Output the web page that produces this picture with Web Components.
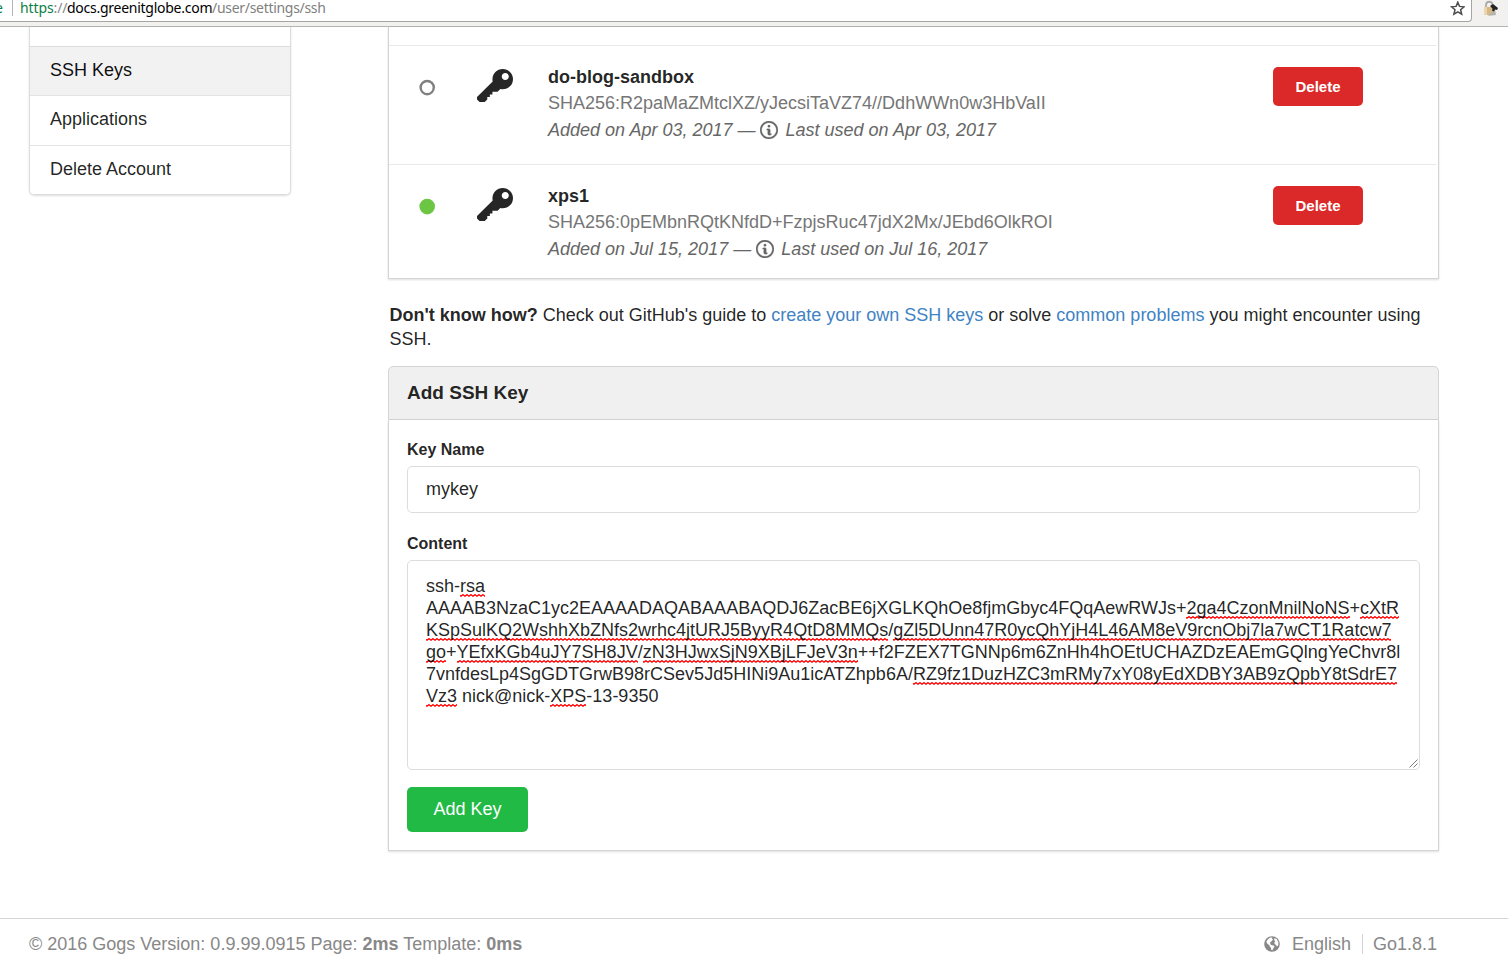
<!DOCTYPE html>
<html lang="en">
<head>
<meta charset="utf-8">
<title>SSH Keys - Gogs</title>
<style>
html,body{margin:0;height:100%}
body{font:18px/24px "Liberation Sans",Arial,sans-serif;color:rgba(0,0,0,.87);background:#fff;overflow:hidden}
</style>
</head>
<body>
<ssh-page></ssh-page>
<script>
const def = (name, html) => customElements.define(name, class extends HTMLElement {
  constructor() {
    super();
    const t = document.createElement('template');
    t.innerHTML = html.trim();
    this.attachShadow({mode: 'open'}).appendChild(t.content.cloneNode(true));
  }
});

def('browser-bar', `
<style>
:host{display:block;height:26px;background:#f2f1f0;border-bottom:1px solid #b4b4b2;font:14px/16px "Noto Sans",sans-serif}
.row{display:flex;height:22px}
.url{box-sizing:border-box;width:1472px;height:22px;background:#fff;border:solid #a5a5a3;border-width:0 1px 1px 0;border-bottom-right-radius:4px;display:flex;align-items:flex-start}
.e{width:12px;color:#0b8043;text-indent:-5px}
.sep{width:1px;height:16px;background:#b5b5b5;margin-right:7px}
.t{display:flex;flex:1;white-space:pre}
.s{color:#0b8043;width:47px;letter-spacing:-.1px}.s i{font-style:normal;color:#888}
.h{color:#000;width:145px;letter-spacing:-.26px}.p{color:#808080;letter-spacing:-.3px}
.star{margin:1px 6px 0 0}
.ext{margin:0 0 0 10px}
</style>
<div class="row"><div class="url"><div class="e">e</div><div class="sep"></div>
<div class="t"><span class="s">https<i>://</i></span><span class="h">docs.greenitglobe.com</span><span class="p">/user/settings/ssh</span></div>
<svg class="star" width="15" height="15" viewBox="0 0 15 15"><path d="M7.8 1.2 9.5 5.4 14.100 5.8 10.600 8.8 11.700 13.2 7.8 10.800 3.9 13.2 5 8.800 1.500 5.8 6.100 5.4Z" fill="none" stroke="#4d4d4d" stroke-width="1.5"/></svg></div>
<svg class="ext" width="18" height="18" viewBox="0 0 18 18"><path d="M4 8V4.500a3.300 3.300 0 0 1 6.500 0V7" fill="none" stroke="#aaa" stroke-width="1.800"/><path d="M2 7h9v8H2Z" fill="#d8b882"/><path d="M2 7h3v8H2Z" fill="#ead5ae"/><path d="m6 16 7-7 1 6Z" fill="#b5b5b0"/><path d="m8 6 3-2 5 4-1 2-2-.5-1 2-2-1 .5-2Z" fill="#222"/></svg></div>`);

def('nav-item', `
<style>
:host{display:flex;align-items:center;box-sizing:border-box;height:49px;padding:0 20px 2px;border-top:1px solid #e3e3e4}
:host([active]){background:#f2f2f2;color:rgba(0,0,0,.95);border-top-color:#dcdddd}
</style><slot></slot>`);

def('side-nav', `
<style>
:host{display:block;box-sizing:border-box;width:262px;height:168px;border:1px solid #dcdddd;border-top:0;border-radius:0 0 5px 5px;box-shadow:0 1px 2px rgba(34,36,38,.15);padding-top:19px;overflow:hidden}
::slotted(:nth-child(2)){height:50px;padding-bottom:3px}
</style><slot></slot>`);

def('ui-button', `
<style>
:host{display:flex;align-items:center;justify-content:center;box-sizing:border-box;border-radius:5px;color:#fff;width:121px;height:45px;background:#21ba45;padding-bottom:1px}
:host([danger]){width:90px;height:39px;background:#db2828;font-size:15px;font-weight:bold;padding:1px 0 0}
</style><slot></slot>`);

def('info-icon', `
<style>:host{display:inline-block;width:18px;height:18px;margin:0 7px 0 5px;vertical-align:-3px}svg{display:block}</style>
<svg width="18" height="18" viewBox="0 .98 14 14"><path fill="#666" stroke="#666" stroke-width=".2" d="M6.3 5.69a.942.942 0 0 1-.28-.7c0-.28.09-.52.28-.7.19-.18.42-.28.7-.28.28 0 .52.09.7.28.18.19.28.42.28.7 0 .28-.09.52-.28.7a1 1 0 0 1-.7.3c-.28 0-.52-.11-.7-.3zM8 7.99c-.02-.25-.11-.48-.31-.69-.2-.19-.42-.3-.69-.31H6c-.27.02-.48.13-.69.31-.2.2-.3.44-.31.69h1v3c.02.27.11.5.31.69.2.2.42.31.69.31h1c.27 0 .48-.11.69-.31.2-.19.3-.42.31-.69H8V7.98v.01zM7 2.3c-3.14 0-5.7 2.54-5.7 5.68 0 3.14 2.56 5.7 5.7 5.7s5.7-2.55 5.7-5.7c0-3.15-2.56-5.69-5.7-5.69v.01zM7 .98c3.86 0 7 3.14 7 7s-3.14 7-7 7-7-3.12-7-7 3.14-7 7-7z"/></svg>`);

def('key-row', `
<style>
:host{display:flex;box-sizing:border-box;height:119px;margin:0 2px 0 0;border-top:1px solid #e8e9e9;padding:21px 73px 0 30px;align-items:flex-start}
:host(:last-of-type){height:114px}
.dot{margin:12px 42px 0 0}
circle{fill:none;stroke:#808080;stroke-width:2.4}
:host([used]) circle{fill:#6cc644;stroke:#6cc644}
.key{margin:2px 35px 0 0}
.txt{flex:1;display:flex;flex-direction:column;white-space:nowrap;line-height:26px;margin-top:-3px}
.n{font-weight:bold}.f{color:#767676}.d{font-style:italic;color:#666;line-height:28px}
</style>
<svg class="dot" width="16" height="17"><circle cx="8.200" cy="8.600" r="6.600"/></svg>
<svg class="key" width="36" height="33" viewBox="0 1 14 13" preserveAspectRatio="none"><path fill="#262626" d="M12.83 2.17C12.08 1.42 11.14 1.03 10 1c-1.13.03-2.08.42-2.83 1.17S6.04 3.86 6.01 5c0 .3.03.59.09.89L0 12v1l1 1h2l1-1v-1h1v-1h1v-1h2l1.09-1.11c.3.08.59.11.91.11 1.14-.03 2.08-.42 2.83-1.17S13.97 6.14 14 5c-.03-1.14-.42-2.08-1.17-2.83zM11 5.38c-.77 0-1.38-.61-1.38-1.38 0-.77.61-1.38 1.38-1.38.77 0 1.38.61 1.38 1.38 0 .77-.61 1.38-1.38 1.38z"/></svg>
<div class="txt"><div class="n"><slot name="name"></slot></div><div class="f"><slot name="print"></slot></div><div class="d"><slot name="date"></slot></div></div>
<ui-button danger>Delete</ui-button>`);

def('key-list', `
<style>:host{display:block;box-sizing:border-box;height:252px;border:1px solid #d4d4d5;border-top:0;box-shadow:0 1px 2px rgba(34,36,38,.15);padding-top:18px}</style><slot></slot>`);

def('help-text', `
<style>:host{display:block;margin:24px 0 15px 1.4px;line-height:24px}a{color:#4183c4}</style>
<b>Don't know how?</b> Check out GitHub's guide to <a>create your own SSH keys</a> or solve <a>common problems</a> you might encounter using SSH.`);

def('text-field', `
<style>
:host{display:block}
label{display:block;font-weight:bold;font-size:16px;line-height:22px;padding-top:1px;margin-bottom:5px}
.box{position:relative;box-sizing:border-box;height:47px;border:1px solid #dcdddd;border-radius:5px;padding:11px 18px;line-height:22px;white-space:nowrap}
:host([tall]) .box{height:210px;padding-top:14px}
svg{display:none}
:host([tall]) svg{display:block;position:absolute;right:1px;bottom:1px}
</style>
<label><slot name="label"></slot></label><div class="box"><slot></slot><svg width="9" height="9" viewBox="0 0 9 9"><path d="M.5 8.500l8-8M4.500 8.500l4-4" stroke="#777" fill="none"/></svg></div>`);

def('text-line', `<style>:host{display:block;height:22px;white-space:pre}</style><slot></slot>`);

def('mis-spelt', `
<style>:host{display:inline-block;height:22px;background:url("data:image/svg+xml,%3Csvg xmlns='http://www.w3.org/2000/svg' width='4' height='3'%3E%3Cpath d='M-1 .5L1 2.300L3 .5L5 2.300' fill='none' stroke='%23f00' stroke-width='1.150'/%3E%3C/svg%3E") repeat-x left bottom}</style><slot></slot>`);

def('add-panel', `
<style>
:host{display:block;box-sizing:border-box;height:485px}
h4{box-sizing:border-box;height:54px;margin:0;font-size:19px;line-height:52px;padding-left:18px;background:#f0f0f0;border:1px solid #d4d4d5;border-radius:5px 5px 0 0}
.body{box-sizing:border-box;height:431px;border:1px solid #d4d4d5;border-top:0;box-shadow:0 1px 2px rgba(34,36,38,.15);padding:18px 18px 0;display:flex;flex-direction:column;gap:19px}
ui-button{margin-top:-2px}
</style>
<h4>Add SSH Key</h4>
<div class="body">
<text-field><span slot="label">Key Name</span>mykey</text-field>
<text-field tall><span slot="label">Content</span><text-line>ssh-<mis-spelt>rsa</mis-spelt></text-line><text-line>AAAAB3NzaC1yc2EAAAADAQABAAABAQDJ6ZacBE6jXGLKQhOe8fjmGbyc4FQqAewRWJs+<mis-spelt>2ga4CzonMnilNoNS</mis-spelt>+<mis-spelt>cXtR</mis-spelt></text-line><text-line><mis-spelt>KSpSulKQ2WshhXbZNfs2wrhc4jtURJ5ByyR4QtD8MMQs</mis-spelt>/<mis-spelt>gZl5DUnn47R0ycQhYjH4L46AM8eV9rcnObj7la7wCT1Ratcw7</mis-spelt></text-line><text-line><mis-spelt>go</mis-spelt>+<mis-spelt>YEfxKGb4uJY7SH8JV</mis-spelt>/<mis-spelt>zN3HJwxSjN9XBjLFJeV3n</mis-spelt>++f2FZEX7TGNNp6m6ZnHh4hOEtUCHAZDzEAEmGQlngYeChvr8l</text-line><text-line>7vnfdesLp4SgGDTGrwB98rCSev5Jd5HINi9Au1icATZhpb6A/<mis-spelt>RZ9fz1DuzHZC3mRMy7xY08yEdXDBY3AB9zQpbY8tSdrE7</mis-spelt></text-line><text-line><mis-spelt>Vz3</mis-spelt> nick@nick-<mis-spelt>XPS</mis-spelt>-13-9350</text-line></text-field>
<ui-button>Add Key</ui-button>
</div>`);

def('page-footer', `
<style>
:host{display:flex;box-sizing:border-box;height:43px;border-top:1px solid #d4d4d4;padding:0 71px 0 29px;color:#888;justify-content:space-between;line-height:50px;white-space:nowrap}
.r{display:flex;align-items:center;height:50px}
.r svg{margin-right:12px}
.v{border-left:1px solid #d4d4d4;line-height:20px;height:20px;padding-left:10px;margin-left:11px}
</style>
<div>© 2016 Gogs Version: 0.9.99.0915 Page: <b>2ms</b> Template: <b>0ms</b></div>
<div class="r"><svg width="16" height="16" viewBox="0 0 16 16"><circle cx="8" cy="8" r="7.8" fill="#888"/><path fill="#fff" d="M4.200 3 6.500 1.600 8.500 1.500 7.800 2.800 9.200 3.500 7.900 4.800 6.900 5.900 5.700 6.500 6.600 7.400 6 8 7.300 8.900 9.600 9.500 10.600 10.600 9.500 12 8.400 14.200 7.200 13.800 6.800 11.600 5.600 10.300 5.300 8.900 3.500 7.900 2.300 5.600ZM10.400 2 12.600 3.100 14.300 6 14.400 9 13 10.500 12 9 10.700 8 10.300 6.500 11.300 5.200 10.200 4.200Z"/></svg><span>English</span><span class="v">Go1.8.1</span></div>`);

def('ssh-page', `
<style>
:host{display:flex;flex-direction:column;height:961px;overflow:hidden}
main{display:grid;grid-template-columns:262px 1051px;column-gap:97px;padding-left:29px;height:891px;align-items:start}
</style>
<browser-bar></browser-bar>
<main>
<side-nav><nav-item active>SSH Keys</nav-item><nav-item>Applications</nav-item><nav-item>Delete Account</nav-item></side-nav>
<section>
<key-list>
<key-row><span slot="name">do-blog-sandbox</span><span slot="print">SHA256:R2paMaZMtclXZ/yJecsiTaVZ74//DdhWWn0w3HbVaII</span><span slot="date">Added on Apr 03, 2017 —<info-icon></info-icon>Last used on Apr 03, 2017</span></key-row>
<key-row used><span slot="name">xps1</span><span slot="print">SHA256:0pEMbnRQtKNfdD+FzpjsRuc47jdX2Mx/JEbd6OlkROI</span><span slot="date">Added on Jul 15, 2017 —<info-icon></info-icon>Last used on Jul 16, 2017</span></key-row>
</key-list>
<help-text></help-text>
<add-panel></add-panel>
</section>
</main>
<page-footer></page-footer>`);
</script>
</body>
</html>
